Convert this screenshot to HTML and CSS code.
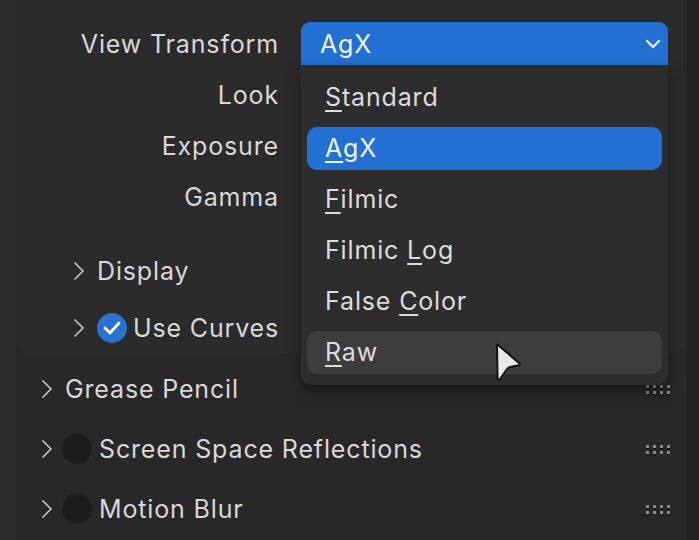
FILE: index.html
```html
<!DOCTYPE html>
<html lang="en">
<head>
  <meta charset="UTF-8" />
  <title>Color Management</title>
  <link rel="stylesheet" href="styles.css">
</head>
<body>
  <div class="app">
    <div class="tabs"></div>
    <div class="main">
      <div class="subpanel">
        <div class="prop">
          <span class="label">View Transform</span>
          <div class="field">
            <div class="dropdown">
              <span>AgX</span>
              <svg class="chev-down" width="16" height="10" viewBox="0 0 16 10"><path d="M2 2 L8 8 L14 2" fill="none" stroke="#e6eefa" stroke-width="2.4" stroke-linecap="round" stroke-linejoin="round"/></svg>
            </div>
            <div class="menu">
              <div class="item"><u>S</u>tandard</div>
              <div class="item active"><u>A</u>gX</div>
              <div class="item"><u>F</u>ilmic</div>
              <div class="item">Filmic <u>L</u>og</div>
              <div class="item">False <u>C</u>olor</div>
              <div class="item hover"><u>R</u>aw</div>
            </div>
            <svg class="cursor" width="34" height="42" viewBox="0 0 34 42"><path d="M6 4 Q5 2 7 3 L28 21 Q30 23 27 23.5 L19 25 Q17 25.5 16 27 L9 37 Q7 39 6.6 36.5 Z" fill="#e8e8e8" stroke="#111" stroke-width="2" stroke-linejoin="round"/></svg>
          </div>
        </div>
        <div class="prop"><span class="label">Look</span></div>
        <div class="prop"><span class="label">Exposure</span></div>
        <div class="prop"><span class="label">Gamma</span></div>

        <div class="sub-head first">
          <svg class="chev" width="12" height="20" viewBox="0 0 12 20"><path d="M2 2 L10 10 L2 18" fill="none" stroke="#c4c4c4" stroke-width="1.7" stroke-linecap="round" stroke-linejoin="round"/></svg>
          <span>Display</span>
        </div>
        <div class="sub-head second">
          <svg class="chev" width="12" height="20" viewBox="0 0 12 20"><path d="M2 2 L10 10 L2 18" fill="none" stroke="#c4c4c4" stroke-width="1.7" stroke-linecap="round" stroke-linejoin="round"/></svg>
          <span class="check on">
            <svg width="18" height="14" viewBox="0 0 18 14"><path d="M2 7 L7 12 L16 2" fill="none" stroke="#fff" stroke-width="2.8" stroke-linecap="round" stroke-linejoin="round"/></svg>
          </span>
          <span>Use Curves</span>
        </div>
      </div>

      <div class="panel-head top">
        <svg class="chev" width="12" height="20" viewBox="0 0 12 20"><path d="M2 2 L10 10 L2 18" fill="none" stroke="#c4c4c4" stroke-width="1.7" stroke-linecap="round" stroke-linejoin="round"/></svg>
        <span>Grease Pencil</span>
        <span class="grip"><i></i><i></i><i></i><i></i><i></i><i></i><i></i><i></i></span>
      </div>
      <div class="panel-head">
        <svg class="chev" width="12" height="20" viewBox="0 0 12 20"><path d="M2 2 L10 10 L2 18" fill="none" stroke="#c4c4c4" stroke-width="1.7" stroke-linecap="round" stroke-linejoin="round"/></svg>
        <span class="check"></span>
        <span>Screen Space Reflections</span>
        <span class="grip"><i></i><i></i><i></i><i></i><i></i><i></i><i></i><i></i></span>
      </div>
      <div class="panel-head">
        <svg class="chev" width="12" height="20" viewBox="0 0 12 20"><path d="M2 2 L10 10 L2 18" fill="none" stroke="#c4c4c4" stroke-width="1.7" stroke-linecap="round" stroke-linejoin="round"/></svg>
        <span class="check"></span>
        <span>Motion Blur</span>
        <span class="grip"><i></i><i></i><i></i><i></i><i></i><i></i><i></i><i></i></span>
      </div>
    </div>
    <div class="edge"></div>
  </div>
</body>
</html>
```

FILE: styles.css
```css
body {
  margin: 0;
  width: 699px;
  height: 540px;
  overflow: hidden;
  background: #282828;
  font-family: Inter, "Noto Sans", sans-serif;
  font-size: 25px;
  letter-spacing: 0.85px;
  color: #d8d8d8;
}
.app {
  display: flex;
  height: 540px;
}
.tabs {
  width: 16px;
  background: #2d2d2d;
}
.edge {
  width: 11px;
  background: #232323;
  border-left: 1px solid #1e1e1e;
}
.main {
  flex: 1;
  display: flex;
  flex-direction: column;
}
.subpanel {
  margin: 0 4px 0 1px;
  padding: 22px 0 5px;
  background: #2b2b2b;
  border-radius: 0 0 9px 9px;
  display: flex;
  flex-direction: column;
  gap: 8px;
}
.prop {
  display: grid;
  grid-template-columns: 262px 367px;
  column-gap: 22px;
  height: 43px;
  align-items: center;
}
.label {
  text-align: right;
}
.field {
  position: relative;
  height: 43px;
}
.dropdown {
  height: 43px;
  background: #2170d2;
  border-radius: 9px 9px 0 0;
  display: flex;
  align-items: center;
  justify-content: space-between;
  padding: 0 7px 0 19px;
  color: #f2f2f2;
}
.menu {
  position: absolute;
  top: 43px;
  left: 0;
  width: 367px;
  box-sizing: border-box;
  padding: 11px 6px;
  background: #2d2d2d;
  border-radius: 0 0 10px 10px;
  box-shadow: 0 6px 14px rgba(0, 0, 0, 0.45);
  display: flex;
  flex-direction: column;
  gap: 8px;
  z-index: 2;
}
.item {
  height: 43px;
  line-height: 43px;
  padding-left: 18px;
  border-radius: 10px;
  color: #dcdcdc;
}
.item u {
  text-decoration-thickness: 2px;
  text-underline-offset: 4px;
}
.item.active {
  background: #2170d2;
  color: #f4f4f4;
}
.item.hover {
  background: #3d3d3d;
}
.cursor {
  position: absolute;
  left: 190px;
  top: 320px;
  z-index: 3;
}
.sub-head {
  display: flex;
  align-items: center;
  height: 43px;
  padding-left: 56px;
}
.sub-head.first {
  margin-top: 23px;
}
.sub-head.second {
  margin-top: 6px;
}
.chev {
  margin-right: 12px;
}
.check {
  width: 30px;
  height: 30px;
  border-radius: 50%;
  background: #1c1c1c;
  margin: 0 7px 0 0;
  display: flex;
  align-items: center;
  justify-content: center;
}
.panel-head .check {
  margin-left: -3px;
}
.check.on {
  background: #2a72d0;
  margin-right: 6px;
}
.panel-head {
  display: flex;
  align-items: center;
  height: 60px;
  padding-left: 25px;
  position: relative;
}
.panel-head.top {
  margin-top: 5px;
}
.grip {
  position: absolute;
  right: 17px;
  top: 26px;
  display: grid;
  grid-template-columns: repeat(4, 3px);
  gap: 3px 4px;
}
.grip i {
  width: 3px;
  height: 3px;
  background: #8a8a8a;
  box-shadow: 0 1px 0 #111;
}
```
